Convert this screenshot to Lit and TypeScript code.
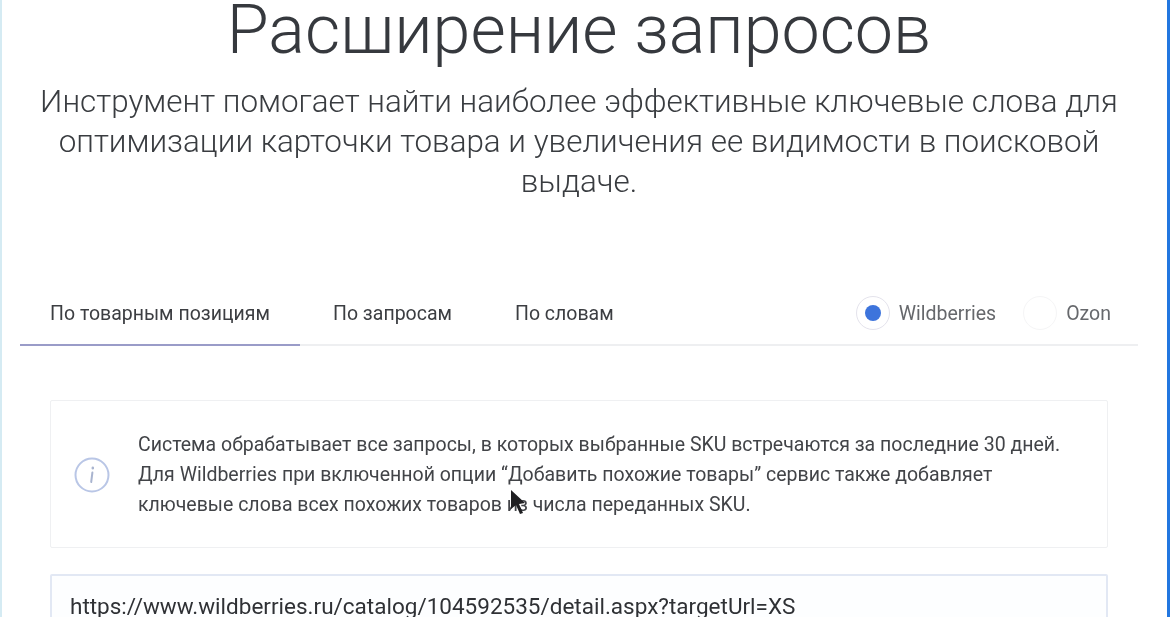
import { LitElement, html, css } from 'lit';
import { customElement, state } from 'lit/decorators.js';

@customElement('app-root')
export class AppRoot extends LitElement {
  @state()
  tab = 0;

  @state()
  market = 'wb';

  static styles = css`
    :host {
      display: block;
      position: relative;
      height: 617px;
      overflow: hidden;
      background: #fff;
      font-family: Roboto, "Liberation Sans", sans-serif;
      color: #3d3f43;
      box-sizing: border-box;
      border-left: 2px solid #d5ebf3;
      border-right: 3px solid #2277e0;
      filter: blur(0.5px);
    }

    .head {
      text-align: center;
      padding: 0 40px 0 29px;
    }

    h1 {
      margin: 0;
      height: 82px;
      line-height: 60px;
      font-size: 68.2px;
      font-weight: 300;
      color: #36393e;
    }

    .lead {
      margin: 0;
      font-size: 31.4px;
      font-weight: 300;
      line-height: 40px;
      color: #393c40;
    }

    .tabs {
      display: flex;
      align-items: center;
      margin: 80px 29px 0 18px;
      height: 62px;
      border-bottom: 2px solid #eeeff1;
      box-sizing: content-box;
    }

    .tab {
      height: 62px;
      box-sizing: content-box;
      margin-bottom: -2px;
      border: 0;
      border-bottom: 2px solid transparent;
      background: none;
      padding: 0 31px;
      font: 400 19.5px Roboto, sans-serif;
      color: #3c3e42;
      cursor: pointer;
    }

    .tab.first {
      width: 280px;
      padding: 0;
    }

    .tab.on {
      border-bottom-color: #9a9cc8;
    }

    .tab.two {
      padding: 0 32px 0 33px;
    }

    .markets {
      margin-left: auto;
      display: flex;
      align-items: center;
      padding-right: 27px;
    }

    .market {
      display: flex;
      align-items: center;
      gap: 9px;
      font-size: 19.5px;
      color: #66686c;
      cursor: pointer;
    }

    .market + .market {
      margin-left: 27px;
    }

    .dot {
      width: 34px;
      height: 34px;
      box-sizing: border-box;
      border: 1px solid #f5f5f6;
      border-radius: 50%;
      display: grid;
      place-items: center;
    }

    .market.on .dot {
      border: 1.5px solid #e4e3ec;
    }

    .market.on .dot::after {
      content: '';
      width: 16px;
      height: 16px;
      border-radius: 50%;
      background: #3d74dc;
    }

    .body {
      padding: 54px 59px 0 48px;
    }

    .note {
      display: flex;
      align-items: center;
      gap: 28px;
      height: 148px;
      box-sizing: border-box;
      padding: 2px 23px 0;
      border: 1px solid #eff0f2;
      border-radius: 2px;
    }

    .note svg {
      flex: none;
    }

    .note p {
      margin: 0;
      font-size: 19.5px;
      line-height: 30px;
      white-space: nowrap;
      color: #424448;
    }

    .field {
      margin-top: 26px;
      height: 80px;
      box-sizing: border-box;
      padding: 17px 18px;
      border: 2px solid #e2e8f4;
      border-radius: 2px;
      background: #fdfeff;
      font-size: 22.5px;
      line-height: 26px;
      color: #2f3135;
    }

    .cursor {
      position: absolute;
      left: 507px;
      top: 489px;
    }
  `;

  render() {
    return html`
      <div class="head">
        <h1>Расширение запросов</h1>
        <p class="lead">
          Инструмент помогает найти наиболее эффективные ключевые слова для
          оптимизации карточки товара и увеличения ее видимости в поисковой
          выдаче.
        </p>
      </div>

      <div class="tabs">
        <button class="tab first ${this.tab === 0 ? 'on' : ''}" @click=${() => (this.tab = 0)}>По товарным позициям</button>
        <button class="tab two ${this.tab === 1 ? 'on' : ''}" @click=${() => (this.tab = 1)}>По запросам</button>
        <button class="tab ${this.tab === 2 ? 'on' : ''}" @click=${() => (this.tab = 2)}>По словам</button>
        <div class="markets">
          <div class="market ${this.market === 'wb' ? 'on' : ''}" @click=${() => (this.market = 'wb')}>
            <span class="dot"></span>Wildberries
          </div>
          <div class="market ${this.market === 'ozon' ? 'on' : ''}" @click=${() => (this.market = 'ozon')}>
            <span class="dot"></span>Ozon
          </div>
        </div>
      </div>

      <div class="body">
        <div class="note">
          <svg width="36" height="36" viewBox="0 0 36 36" fill="none">
            <circle cx="18" cy="18" r="16.5" stroke="#b9c6e6" stroke-width="2" />
            <path d="M18.8 10.6v.6" stroke="#a9b4cf" stroke-width="2.4" stroke-linecap="round" />
            <path d="M18.4 15.5l-1.2 9.5" stroke="#a9b4cf" stroke-width="2" stroke-linecap="round" />
          </svg>
          <p>
            Система обрабатывает все запросы, в которых выбранные SKU встречаются за последние 30 дней.<br />
            Для Wildberries при включенной опции “Добавить похожие товары” сервис также добавляет<br />
            ключевые слова всех похожих товаров из числа переданных SKU.
          </p>
        </div>
        <div class="field">https://www.wildberries.ru/catalog/104592535/detail.aspx?targetUrl=XS</div>
      </div>

      <svg class="cursor" width="20" height="30" viewBox="0 0 20 30">
        <path d="M2 1l0 19 5-4 4 9 3-1-4-9 6-1z" fill="#1f1f22" />
      </svg>
    `;
  }
}
